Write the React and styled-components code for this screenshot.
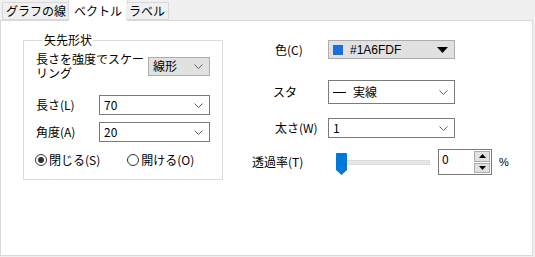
import React from 'react'
import styled, { createGlobalStyle } from 'styled-components'

const GlobalStyle = createGlobalStyle`
    html, body {
        margin: 0;
        padding: 0;
        background: #f0f0f0;
    }
    body {
        font-family: "Noto Sans CJK JP", "Noto Sans", sans-serif;
        font-size: 12px;
        color: #000;
    }
`;

const Window = styled.div`
    width: 535px;
    height: 257px;
    background: #f0f0f0;
    display: flex;
    flex-direction: column;
    overflow: hidden;
`;

const TabBar = styled.div`
    display: flex;
    align-items: flex-end;
    height: 20px;
    padding-left: 2px;
    position: relative;
    z-index: 2;
`;

const Tab = styled.div`
    box-sizing: border-box;
    height: ${p => p.$active ? '22px' : '18px'};
    margin-bottom: ${p => p.$active ? '-1px' : '0'};
    margin-left: ${p => p.$active ? '-2px' : '0'};
    margin-right: ${p => p.$active ? '-2px' : '0'};
    padding: 0 ${p => p.$active ? '5px' : '3px'};
    border: 1px solid #d9d9d9;
    border-bottom: ${p => p.$active ? 'none' : '1px solid #d9d9d9'};
    border-left: ${p => p.$first || p.$active ? '1px solid #d9d9d9' : 'none'};
    background: ${p => p.$active ? '#fff' : '#f0f0f0'};
    display: flex;
    align-items: center;
    font-size: 12px;
    line-height: 1;
    white-space: nowrap;
`;

const Panel = styled.div`
    box-sizing: border-box;
    width: 533px;
    height: 236px;
    background: #fff;
    border: 1px solid #d9d9d9;
    display: flex;
    padding: 12px 0 0 22px;
`;

const GroupBox = styled.fieldset`
    box-sizing: border-box;
    width: 200px;
    height: 147px;
    margin: 0;
    padding: 5px 12px 0 12px;
    border: 1px solid #dcdcdc;
    display: flex;
    flex-direction: column;
`;

const Legend = styled.legend`
    padding: 0 1px;
    margin-left: 7px;
    font-size: 12px;
    line-height: 14px;
`;

const FormRow = styled.div`
    display: flex;
    align-items: center;
    justify-content: space-between;
    margin-bottom: ${p => p.$gap || 6}px;
`;

const Label = styled.span`
    display: block;
    font-size: 12px;
    line-height: 14px;
    white-space: nowrap;
`;

const Select = styled.div`
    box-sizing: border-box;
    width: ${p => p.$w}px;
    height: ${p => p.$h || 20}px;
    border: 1px solid ${p => p.$flat ? '#adadad' : '#7a7a7a'};
    background: ${p => p.$flat ? '#e1e1e1' : '#fff'};
    display: flex;
    align-items: center;
    padding: 0 6px 0 4px;
    font-size: 12px;
    line-height: 1;
`;

const SelectText = styled.span`
    flex: 1;
    display: flex;
    align-items: center;
    gap: 7px;
    white-space: nowrap;
`;

const Chevron = () => (
    <svg width="9" height="5" viewBox="0 0 9 5">
        <path d="M0.5 0.5 L4.5 4.5 L8.5 0.5" fill="none" stroke="#606060" strokeWidth="1" />
    </svg>
);

const Triangle = () => (
    <svg width="11" height="6" viewBox="0 0 11 6">
        <path d="M0 0 H11 L5.5 6 Z" fill="#000" />
    </svg>
);

const RadioRow = styled.div`
    display: flex;
    margin-top: 5px;
    margin-left: -1px;
`;

const Radio = styled.label`
    display: flex;
    align-items: center;
    gap: 2px;
    font-size: 12px;
    line-height: 14px;
    white-space: nowrap;
    margin-left: ${p => p.$offset || 0}px;
`;

const RadioCircle = styled.span`
    box-sizing: border-box;
    width: 12px;
    height: 12px;
    border-radius: 50%;
    border: 1px solid #333;
    display: flex;
    align-items: center;
    justify-content: center;
    &::after {
        content: '';
        width: 6px;
        height: 6px;
        border-radius: 50%;
        background: ${p => p.$checked ? '#333' : 'transparent'};
    }
`;

const RightColumn = styled.div`
    display: flex;
    flex-direction: column;
    padding-top: 7px;
    margin-left: 29px;
`;

const PropRow = styled.div`
    display: flex;
    align-items: center;
    height: ${p => p.$h}px;
    margin-left: ${p => p.$indent || 0}px;
    margin-top: ${p => p.$top || 0}px;
`;

const PropLabel = styled.span`
    width: ${p => p.$w}px;
    font-size: 12px;
    line-height: 12px;
    white-space: nowrap;
`;

const Swatch = styled.span`
    width: 10px;
    height: 10px;
    background: #1a6fdf;
    display: inline-block;
`;

const HexText = styled.span`
    font-family: "Liberation Sans", sans-serif;
    font-size: 12px;
`;

const Dash = styled.span`
    width: 13px;
    height: 1px;
    background: #000;
    display: inline-block;
`;

const Slider = styled.div`
    position: relative;
    width: 94px;
    height: 24px;
    display: flex;
    align-items: center;
`;

const Track = styled.div`
    margin-left: 6px;
    width: 88px;
    height: 3px;
    background: #e7e7e7;
    border: 1px solid #dcdcdc;
`;

const Thumb = styled.svg`
    position: absolute;
    left: 0;
    top: 3px;
`;

const Spin = styled.div`
    box-sizing: border-box;
    width: 54px;
    height: 26px;
    border: 1px solid #7a7a7a;
    display: flex;
    margin-left: 8px;
`;

const SpinValue = styled.span`
    flex: 1;
    padding: 2px 0 0 3px;
    font-size: 12px;
    line-height: 14px;
`;

const SpinButtons = styled.div`
    width: 16px;
    display: flex;
    flex-direction: column;
    gap: 1px;
    padding: 1px 1px 1px 0;
`;

const SpinButton = styled.div`
    flex: 1;
    background: #e1e1e1;
    border: 1px solid #adadad;
    display: flex;
    align-items: center;
    justify-content: center;
`;

const Percent = styled.span`
    margin-left: 7px;
    font-family: "Liberation Sans", sans-serif;
    font-size: 11px;
`;

const App = () => {
    return (
        <Window>
            <GlobalStyle />
            <TabBar>
                <Tab $first>グラフの線</Tab>
                <Tab $active>ベクトル</Tab>
                <Tab>ラベル</Tab>
            </TabBar>
            <Panel>
                <GroupBox>
                    <Legend>矢先形状</Legend>
                    <FormRow $gap={15}>
                        <Label>長さを強度でスケー<br />リング</Label>
                        <Select $w={62} $h={19} $flat>
                            <SelectText>線形</SelectText>
                            <Chevron />
                        </Select>
                    </FormRow>
                    <FormRow $gap={7}>
                        <Label>長さ(L)</Label>
                        <Select $w={111}>
                            <SelectText>70</SelectText>
                            <Chevron />
                        </Select>
                    </FormRow>
                    <FormRow $gap={6}>
                        <Label>角度(A)</Label>
                        <Select $w={111}>
                            <SelectText>20</SelectText>
                            <Chevron />
                        </Select>
                    </FormRow>
                    <RadioRow>
                        <Radio><RadioCircle $checked />閉じる(S)</Radio>
                        <Radio $offset={27}><RadioCircle />開ける(O)</Radio>
                    </RadioRow>
                </GroupBox>
                <RightColumn>
                    <PropRow $h={19} $indent={23}>
                        <PropLabel $w={53}>色(C)</PropLabel>
                        <Select $w={127} $h={19} $flat>
                            <SelectText>
                                <Swatch />
                                <HexText>#1A6FDF</HexText>
                            </SelectText>
                            <Triangle />
                        </Select>
                    </PropRow>
                    <PropRow $h={24} $indent={21} $top={21}>
                        <PropLabel $w={55}>スタ</PropLabel>
                        <Select $w={127} $h={24}>
                            <SelectText>
                                <Dash />
                                実線
                            </SelectText>
                            <Chevron />
                        </Select>
                    </PropRow>
                    <PropRow $h={20} $indent={23} $top={14}>
                        <PropLabel $w={53}>太さ(W)</PropLabel>
                        <Select $w={127}>
                            <SelectText>1</SelectText>
                            <Chevron />
                        </Select>
                    </PropRow>
                    <PropRow $h={26} $top={11}>
                        <PropLabel $w={84}>透過率(T)</PropLabel>
                        <Slider>
                            <Thumb width="11" height="22" viewBox="0 0 11 22">
                                <path d="M0 1 Q0 0 1 0 H10 Q11 0 11 1 V17 L5.5 22 L0 17 Z" fill="#0078d7" />
                            </Thumb>
                            <Track />
                        </Slider>
                        <Spin>
                            <SpinValue>0</SpinValue>
                            <SpinButtons>
                                <SpinButton>
                                    <svg width="7" height="4" viewBox="0 0 7 4"><path d="M3.5 0 L7 4 H0 Z" fill="#000" /></svg>
                                </SpinButton>
                                <SpinButton>
                                    <svg width="7" height="4" viewBox="0 0 7 4"><path d="M0 0 H7 L3.5 4 Z" fill="#000" /></svg>
                                </SpinButton>
                            </SpinButtons>
                        </Spin>
                        <Percent>%</Percent>
                    </PropRow>
                </RightColumn>
            </Panel>
        </Window>
    )
}

export default App
